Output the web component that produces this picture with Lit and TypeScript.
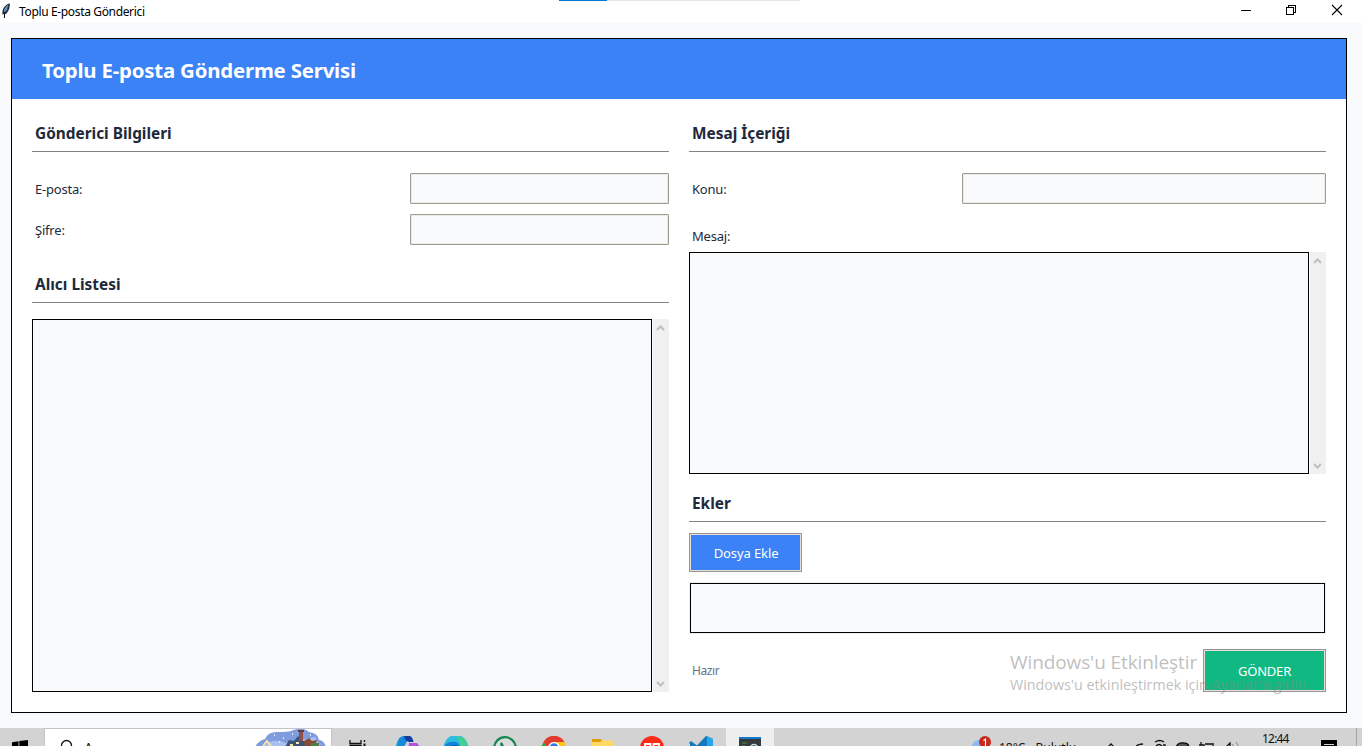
import { LitElement, html, css, svg } from "lit";
import { customElement, property } from "lit/decorators.js";

@customElement("scroll-area")
class ScrollArea extends LitElement {
  static styles = css`
    :host { display: flex; gap: 1px; }
    .text { flex: 1; box-sizing: border-box; border: 1px solid #000; background: #f8fafc; }
    .bar { width: 16px; background: #f0f0f0; display: flex; flex-direction: column; justify-content: space-between; align-items: center; padding: 5px 1px 4px 0; box-sizing: border-box; }
    svg { display: block; }
  `;
  render() {
    return html`<div class="text"></div>
      <div class="bar">
        <svg width="9" height="8"><path d="M1 6 4.500 2.500 8 6" fill="none" stroke="#bfbfbf" stroke-width="2"/></svg>
        <svg width="9" height="8"><path d="M1 2 4.500 5.500 8 2" fill="none" stroke="#bfbfbf" stroke-width="2"/></svg>
      </div>`;
  }
}

@customElement("task-icon")
class TaskIcon extends LitElement {
  @property() name = "";
  static styles = css`
    :host { display: flex; width: 49px; height: 40px; align-items: flex-start; justify-content: center; padding: 8px 2px 0 0; box-sizing: border-box; }
    :host([active]) { background: #eeeeee; width: 48px; padding-right: 0; }
    svg { display: block; }
  `;
  art() {
    switch (this.name) {
      case "taskview":
        return svg`<path d="M4 4v3.500h11V4M4 13v-3.500h11v3.500M18.500 4v2M18.500 10v8" fill="none" stroke="#111" stroke-width="1.300"/><path d="M17.500 7.500h2v3h-2z" fill="#111"/>`;
      case "copilot":
        return svg`<path d="M0 14Q2 4 5 1.500Q7 0 11 0H14Q9 3 7 16H0z" fill="#16a5c8"/><path d="M4 3Q6 0 10 0H15L9 11H2z" fill="#168bdc"/><path d="M9 0H15Q17.500 1 18.500 6H14Q12 6 10 3z" fill="#153d9e"/><path d="M14 7H21Q25 7 23 15H13z" fill="#b353dd"/>`;
      case "edge":
        return svg`<circle cx="12" cy="12" r="12" fill="#1681d8"/><path d="M0 10A12 12 0 0 1 24 12Q23 17 17 16Q15 14 16 11Q15 5 8 6Q3 6 0 10z" fill="#2abfdd"/><path d="M13 0A12 12 0 0 1 24 12Q22 18 17 15Q15 4 13 0z" fill="#43cf91"/><path d="M5 14Q8 7 14 10L12 18z" fill="#0b5cae"/>`;
      case "whatsapp":
        return svg`<circle cx="12" cy="12" r="10.800" fill="#d9dddb" stroke="#168653" stroke-width="2.200"/><path d="M7 8Q8 5 9.500 7L11 10 9 13z" fill="#168653"/>`;
      case "chrome":
        return svg`<circle cx="12" cy="12" r="12" fill="#f9c51d"/><path d="M1.500 6A12 12 0 0 1 22.500 6H12A6 6 0 0 0 7 15z" fill="#e33b2e"/><path d="M1.500 6 7 15 12 24A12 12 0 0 1 1.500 6z" fill="#23a455"/><circle cx="12" cy="12" r="6" fill="#fff"/><circle cx="12" cy="12" r="4.700" fill="#3478e5"/>`;
      case "folder":
        return svg`<path d="M1 3h9l2 3h10v14H1z" fill="#dda008"/><path d="M1 6h8l2-1.500h11v15H1z" fill="#ffd866"/>`;
      case "red":
        return svg`<circle cx="12" cy="12" r="12" fill="#fb2b17"/><path d="M5 14V8h5.500V14M13.500 14V8H19V14M5 11h5.500M13.500 11H19" fill="none" stroke="#fff" stroke-width="1.800"/>`;
      case "code":
        return svg`<path d="M17 0 24 3V21L17 24 5 13 1 16V8L0 7 2 5 8 9.500z" fill="#1479bd"/><path d="M18 0 24 3V21L18 24z" fill="#29a5ee"/>`;
      default:
        return svg`<path d="M1 1h22v20H1z" fill="#343a40"/><path d="M1 1h22v2H1z" fill="#1679c5"/><path d="M4 7h5M4 10h3" stroke="#3d7543" stroke-width="1.300"/><circle cx="16" cy="12" r="3.600" fill="#4d606b" stroke="#d4e1e9" stroke-width="1.300"/>`;
    }
  }
  render() { return html`<svg width="24" height="24" viewBox="0 0 24 24">${this.art()}</svg>`; }
}

@customElement("app-root")
class AppRoot extends LitElement {
  static styles = css`
    :host { display: flex; flex-direction: column; position: relative; width: 1362px; height: 746px; overflow: hidden; background: #f8fafc; font-family: "Noto Sans", "Open Sans", sans-serif; font-size: 13px; color: #1e293b; white-space: nowrap; }
    svg { display: block; flex: none; }
    .titlebar { height: 23px; background: #fff; display: flex; flex: none; color: #000; }
    .name { display: flex; gap: 7px; font-size: 12px; line-height: 23px; width: 200px; flex: none; letter-spacing: -0.35px; }
    .progress { width: 241px; height: 1px; background: #e5e5e5; margin-left: 359px; }
    .progress div { width: 48px; height: 1px; background: #0078d7; }
    .controls { display: flex; margin-left: auto; }
    .card { margin: 15px 15px 15px 11px; width: 1336px; height: 675px; flex: none; box-sizing: border-box; border: 1px solid #000; background: #fff; }
    .banner { height: 60px; background: #3b82f6; color: #fff; font-size: 20.4px; font-weight: 700; line-height: 62px; padding-left: 30px; letter-spacing: -0.19px; }
    .body { display: flex; gap: 20px; padding: 20px; }
    .col { width: 637px; height: 573px; display: flex; flex-direction: column; flex: none; }
    h2 { margin: 0; height: 33px; box-sizing: border-box; border-bottom: 1px solid #838383; padding-left: 3px; font-size: 15.4px; line-height: 30px; flex: none; }
    .field { display: flex; justify-content: space-between; height: 31px; line-height: 32px; padding-left: 3px; margin-bottom: 10px; flex: none; letter-spacing: -0.2px; }
    .first { margin-top: 21px; }
    .entry { width: 259px; box-sizing: border-box; border: 1px solid #9e9a91; border-radius: 1px; background: #f8fafc; box-shadow: inset 0 0 0 1px #eeebe7; }
    .wide { width: 364px; }
    .recipients { margin-top: 15px; }
    .list { margin-top: 16px; flex: 1; }
    .msg { height: 20px; line-height: 21px; padding-left: 3px; margin: 12px 0 6px; letter-spacing: -0.2px; }
    .area { height: 222px; margin-bottom: 15px; }
    .btn { box-sizing: border-box; border: 1px solid #969696; box-shadow: inset 0 0 0 1px #e8e0d8; color: #fff; background: #3b82f6; text-align: center; }
    .add { width: 113px; height: 39px; line-height: 38px; margin: 11px 0 10px; padding-left: 1px; letter-spacing: -0.1px; }
    .files { height: 52px; box-sizing: border-box; border: 1px solid #f0f0f0; display: flex; }
    .files div { flex: 1; border: 1px solid #000; background: #f8fafc; }
    .foot { display: flex; justify-content: space-between; margin-top: 15px; height: 43px; }
    .status { color: #64748b; font-size: 12px; line-height: 43px; padding-left: 3px; letter-spacing: -0.4px; }
    .send { width: 123px; background: #10b981; line-height: 42px; letter-spacing: -0.2px; }
    .mark { position: absolute; left: 1010px; top: 649px; color: rgba(136,136,136,.55); font-family: "Open Sans", "Noto Sans", sans-serif; }
    .mark1 { font-size: 19px; line-height: 26px; letter-spacing: -0.1px; }
    .mark2 { font-size: 14.3px; line-height: 20px; }
    .taskbar { height: 18px; overflow: hidden; background: #d3d3d3; display: flex; color: #111; flex: none; }
    .start { width: 44px; padding: 12px 0 0 12px; box-sizing: border-box; flex: none; }
    .search { width: 288px; height: 40px; box-sizing: border-box; border: 1px solid #c4c4c4; background: #fff; display: flex; flex: none; }
    .search svg { margin-left: 15px; margin-top: 10px; }
    .search span { font-size: 14px; line-height: 38px; margin-left: 8px; width: 171px; }
    .search .scene { margin: 0; }
    .apps { display: flex; margin-left: 2px; }
    .tray { margin-left: auto; display: flex; width: 390px; }
    .weather { font-size: 12px; line-height: 40px; margin-left: 7px; width: 102px; word-spacing: 7px; }
    .clock { font-size: 12px; line-height: 22px; margin-left: 19px; width: 59px; letter-spacing: -0.8px; }
    .peek { width: 1px; background: #a5a5a5; margin-left: 19px; }
  `;
  render() {
    return html`
      <div class="titlebar">
        <div class="name">
          <svg width="12" height="23"><path d="M2.500 15Q1.500 8 7 4.500 9 3 10 4 10 9 7 13 5 15 3.500 14z" fill="#26313d"/><path d="M4 12Q4 8 8 5L7 10z" fill="#73b2df"/><path d="M8 5Q6 9 4.500 13" stroke="#4c7fc0" fill="none"/><path d="M4.500 12V18" stroke="#111"/></svg>
          <span>Toplu E-posta Gönderici</span>
        </div>
        <div class="progress"><div></div></div>
        <div class="controls">
          <svg width="121" height="23" shape-rendering="crispEdges" fill="none" stroke="#000"><path d="M0 10.500h10M45.500 7.500h7v7h-7zM47.500 7V5.500h7v7H53"/><path d="M91 5l10 10M101 5l-10 10" shape-rendering="auto" stroke-width="1.100"/></svg>
        </div>
      </div>
      <div class="card">
        <div class="banner"><span>Toplu E-posta Gönderme Servisi</span></div>
        <div class="body">
          <div class="col">
            <h2><span>Gönderici Bilgileri</span></h2>
            <div class="field first"><span>E-posta:</span><div class="entry"></div></div>
            <div class="field"><span>Şifre:</span><div class="entry"></div></div>
            <h2 class="recipients"><span>Alıcı Listesi</span></h2>
            <scroll-area class="list"></scroll-area>
          </div>
          <div class="col">
            <h2><span>Mesaj İçeriği</span></h2>
            <div class="field first"><span>Konu:</span><div class="entry wide"></div></div>
            <div class="msg"><span>Mesaj:</span></div>
            <scroll-area class="area"></scroll-area>
            <h2><span>Ekler</span></h2>
            <div class="btn add">Dosya Ekle</div>
            <div class="files"><div></div></div>
            <div class="foot"><div class="status">Hazır</div><div class="btn send">GÖNDER</div></div>
          </div>
        </div>
      </div>
      <div class="taskbar">
        <div class="start"><svg width="16" height="16"><path d="M0 2.200 6.500 1.200V8H0zM7.300 1.100 16 0V8H7.300zM0 8.800h6.500v6L0 14zM7.300 8.800H16V16l-8.700-1z" fill="#000"/></svg></div>
        <div class="search">
          <svg width="16" height="20"><circle cx="6.500" cy="6.500" r="5" fill="none" stroke="#111" stroke-width="1.300"/></svg><span>A</span>
          <svg class="scene" width="72" height="38">
            <path d="M0 18Q3 12 10 10 13 2 24 3 32 3 36 2 47-3 54 3 63 4 64 11 69 11 71 18V38H0z" fill="#7f9ddd"/>
            <path d="M8 18Q18 8 31 14L60 8 66 18z" fill="#a8bff0"/>
            <path d="M30 18 34 11 39 12 43 7 47 12 52 12 55 18z" fill="#3d5376"/>
            <path d="M44 1h4v11h-4z" fill="#8f5149"/><path d="M43 2h6" stroke="#5f3943" stroke-width="2"/>
            <path d="M49 12l5-3 3 3 5-1-2 7H50z" fill="#874b32"/><path d="M56 14h8v4h-9z" fill="#547b48"/>
            <path d="M8 17l4-5 4 5M35 16h3M41 14h3" fill="none" stroke="#f6e7a8" stroke-width="2"/>
            <path d="M19 6h1M28 9h1M37 5h1M55 6h1M24 13h1" stroke="#fff" stroke-width="1.500"/>
          </svg>
        </div>
        <div class="apps">
          ${["taskview", "copilot", "edge", "whatsapp", "chrome", "folder", "red", "code"].map((n) => html`<task-icon .name=${n}></task-icon>`)}
          <task-icon .name=${"terminal"} active></task-icon>
        </div>
        <div class="tray">
          <svg width="20" height="20"><path d="M0 18Q1 12 7 12 12 8 17 18z" fill="#8eb9f3"/><circle cx="13" cy="14" r="6" fill="#c9281e"/><path d="M11.500 12.500 13.500 11v7" fill="none" stroke="#fff" stroke-width="1.100"/></svg>
          <span class="weather">18°C Bulutlu</span>
          <svg width="142" height="22" fill="none" stroke="#111" stroke-width="1.300">
            <path d="M5 21l5-5 5 5"/><path d="M34 20Q36 16 42 16"/>
            <path d="M54 14Q59 11 63 14M55 18Q58 15 61 18M62 17h2v4"/>
            <path d="M75 20Q76 14 83 15 88 15 88 20z" fill="#555"/>
            <path d="M98 17h5v5M100 14v3M104 16h9M112 17v5M98 20h3"/>
            <path d="M122 19h3l4-4v7"/><path d="M131 16l2 3M135 14l3 5" stroke="#888" stroke-width="1"/>
          </svg>
          <span class="clock">12:44</span>
          <svg width="16" height="20"><path d="M0 12h16v8H0z" fill="#000"/><path d="M3 16.500h10" stroke="#d3d3d3"/></svg>
          <div class="peek"></div>
        </div>
      </div>
      <div class="mark"><div class="mark1"><span>Windows'u Etkinleştir</span></div><div class="mark2"><span>Windows'u etkinleştirmek için Ayarlar'a gidin.</span></div></div>
    `;
  }
}
